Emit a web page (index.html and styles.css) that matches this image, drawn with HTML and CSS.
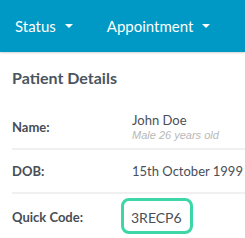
FILE: index.html
```html
<!DOCTYPE html>
<html lang="en">
<head>
    <meta charset="UTF-8">
    <meta name="viewport" content="width=device-width, initial-scale=1.0">
    <title>Patient Details</title>
    <link rel="stylesheet" href="styles.css">
</head>
<body>
    <div class="top-bar">
        <button class="menu-button">Status <span class="caret"></span></button>
        <button class="menu-button">Appointment <span class="caret"></span></button>
    </div>
    <div class="details">
        <h2 class="details-title">Patient Details</h2>
        <div class="detail-row">
            <div class="detail-label">Name:</div>
            <div class="detail-value">
                <div>John Doe</div>
                <div class="detail-sub">Male 26 years old</div>
            </div>
        </div>
        <div class="detail-row">
            <div class="detail-label">DOB:</div>
            <div class="detail-value">15th October 1999</div>
        </div>
        <div class="detail-row last">
            <div class="detail-label">Quick Code:</div>
            <div class="detail-value"><span class="quick-code">3RECP6</span></div>
        </div>
    </div>
</body>
</html>
```

FILE: styles.css
```css
body, html {
    margin: 0;
    padding: 0;
    background: #fff;
    font-family: Lato, 'Liberation Sans', sans-serif;
}
.top-bar {
    display: flex;
    align-items: center;
    gap: 34px;
    height: 52px;
    padding-left: 15px;
    background-color: #0098c4;
    box-shadow: 0 1px 2px rgba(0, 0, 0, 0.18);
}
.menu-button {
    display: flex;
    align-items: center;
    gap: 9px;
    padding: 0;
    color: #fff;
    background: none;
    border: none;
    font-family: inherit;
    font-size: 15px;
}
.caret {
    width: 0;
    height: 0;
    border-left: 4px solid transparent;
    border-right: 4px solid transparent;
    border-top: 4px solid #fff;
}
.details {
    padding-left: 12px;
}
.details-title {
    margin: 0;
    padding: 16px 0 18px;
    font-size: 16px;
    line-height: 20px;
    font-weight: bold;
    color: #4b5560;
}
.detail-row {
    display: flex;
    align-items: center;
    height: 42px;
    border-bottom: 2px solid #f0f0f0;
}
.detail-row.last {
    height: 46px;
    border-bottom: none;
}
.detail-label {
    flex: none;
    width: 120px;
    font-size: 13px;
    font-weight: bold;
    color: #474d55;
}
.detail-value {
    white-space: nowrap;
    font-size: 13px;
    line-height: 16px;
    color: #4a4f57;
}
.detail-sub {
    font-family: 'Liberation Sans', Arial, sans-serif;
    font-size: 11px;
    line-height: 14px;
    font-style: italic;
    color: #b8b8b8;
}
.quick-code {
    display: inline-block;
    margin-left: -11px;
    margin-top: -2px;
    padding: 9px 8px 5px 7px;
    border: 3px solid #3dd6a6;
    border-radius: 8px;
    font-size: 14px;
}
```
